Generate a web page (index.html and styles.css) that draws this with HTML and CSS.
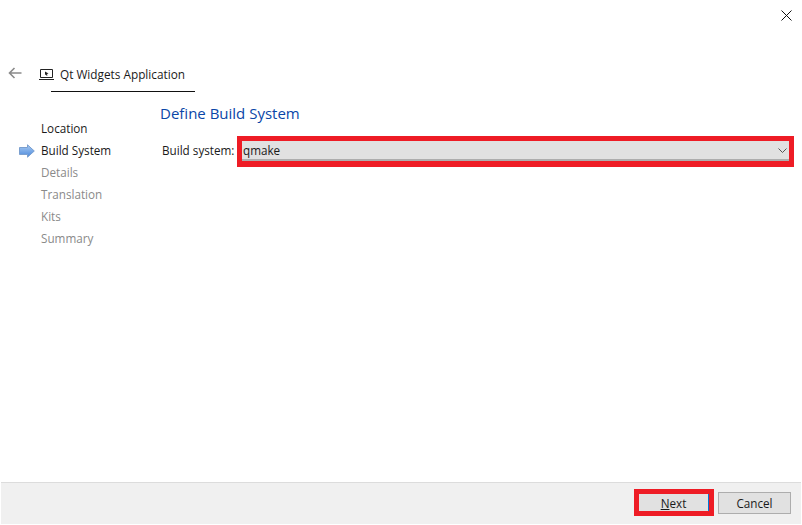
FILE: index.html
```html
<!DOCTYPE html>
<html lang="en">
<head>
<meta charset="utf-8">
<title>Qt Widgets Application</title>
<link rel="stylesheet" href="styles.css">
</head>
<body>
<div class="window">
  <div class="titlebar">
    <svg class="close" width="11" height="11" viewBox="0 0 11 11"><path d="M.5.5l10 10M10.500.5l-10 10" stroke="#111" fill="none"/></svg>
  </div>
  <div class="header">
    <svg class="back" width="14" height="12" viewBox="0 0 14 12"><path d="M13.500 6H1.500M6.500 1L1.500 6l5 5" stroke="#8a8a8a" stroke-width="1.600" fill="none"/></svg>
    <div class="tab">
      <svg class="tab-icon" width="15" height="12" viewBox="0 0 15 12"><path d="M1.500.5h12v8h-12z" stroke="#222" fill="none"/><path d="M0 10.500h15" stroke="#222" fill="none"/><path d="M6 2.500l3.500 2-1.500.5.500 1.500-1 .3-.500-1.400-1 .6z" fill="#222"/></svg>
      <span class="tab-title">Qt Widgets Application</span>
    </div>
  </div>
  <div class="main">
    <ul class="steps">
      <li class="step done">Location</li>
      <li class="step current">
        <svg class="step-arrow" width="16" height="14" viewBox="0 0 16 14"><defs><linearGradient id="a" x1="0" y1="0" x2="0" y2="1"><stop offset="0" stop-color="#a9cbf3"/><stop offset="1" stop-color="#4a88db"/></linearGradient></defs><path d="M.5 3.500h8V.8L15.300 7 8.500 13.200V10.500h-8z" fill="url(#a)" stroke="#7a9fcf"/></svg>
        Build System</li>
      <li class="step">Details</li>
      <li class="step">Translation</li>
      <li class="step">Kits</li>
      <li class="step">Summary</li>
    </ul>
    <div class="content">
      <h1 class="page-title">Define Build System</h1>
      <div class="field">
        <span class="field-label">Build system:</span>
        <div class="highlight highlight-combo">
          <div class="combo">
            <span>qmake</span>
            <svg width="9" height="5" viewBox="0 0 9 5"><path d="M.5.5l4 4 4-4" stroke="#555" fill="none"/></svg>
          </div>
        </div>
      </div>
    </div>
  </div>
  <div class="footer">
    <div class="highlight highlight-next">
      <div class="btn btn-next"><span><u>N</u>ext</span></div>
    </div>
    <div class="btn btn-cancel">Cancel</div>
  </div>
</div>
</body>
</html>
```
FILE: styles.css
```css
* { box-sizing: border-box; }
html, body { margin: 0; padding: 0; background: #fff; }
body { font-family: "Open Sans", "Noto Sans", sans-serif; font-size: 11.7px; color: #1a1a1a; }
.window { width: 802px; height: 525px; display: flex; flex-direction: column; overflow: hidden; }
.titlebar { height: 56px; display: flex; justify-content: flex-end; align-items: flex-start; padding: 10px 10px 0 0; }
.header { height: 36px; display: flex; align-items: stretch; padding-left: 8px; }
.back { margin-top: 11px; flex: none; }
.tab { margin-left: 29px; width: 144px; border-bottom: 1px solid #111; display: flex; align-items: flex-start; position: relative; }
.tab-icon { margin: 13px 0 0 -12px; flex: none; }
.tab-title { margin: 9px 0 0 6px; white-space: nowrap; line-height: 18px; font-size: 11.800px; }
.main { flex: 1; display: flex; min-height: 0; }
.steps { list-style: none; margin: 25px 0 0; padding: 0 0 0 41px; width: 160px; flex: none; }
.step { height: 22px; line-height: 22px; color: #8a8a8a; position: relative; white-space: nowrap; }
.step.done, .step.current { color: #1a1a1a; }
.step-arrow { position: absolute; left: -22px; top: 5px; }
.content { flex: 1; min-width: 0; }
.page-title { margin: 10px 0 0; font-size: 15px; font-weight: 400; line-height: 22px; color: #0a46a8; }
.field { display: flex; align-items: center; margin-top: 12px; padding-left: 2px; }
.field-label { width: 75px; flex: none; white-space: nowrap; margin-top: -3px; }
.highlight { border: 5px solid #ee1c25; }
.highlight-combo { width: 557px; height: 31px; border-bottom-width: 6px; }
.combo { height: 100%; background: #e1e1e1; border-bottom: 2px solid #adadad; display: flex; align-items: center; justify-content: space-between; padding: 0 2px 0 1px; }
.footer { height: 42px; margin: 0 1px 1px; flex: none; background: #f0f0f0; border-top: 1px solid #dcdcdc; display: flex; align-items: center; justify-content: flex-end; gap: 4px; padding-right: 10px; }
.highlight-next { width: 80px; height: 27px; margin-bottom: 2px; }
.btn { background: #e1e1e1; display: flex; align-items: center; justify-content: center; }
.btn-next { height: 100%; border-right: 1px solid #0078d7; }
.btn-cancel { width: 73px; height: 22px; border: 1px solid #adadad; margin-bottom: 1px; }
```
